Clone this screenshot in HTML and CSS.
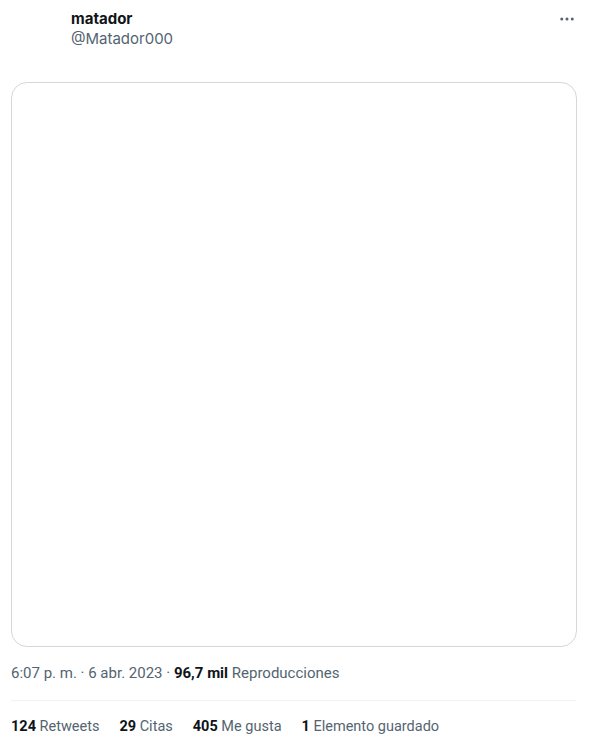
FILE: index.html
```html
<!DOCTYPE html>
<html lang="es">
  <head>
    <meta charset="UTF-8" />
    <meta name="viewport" content="width=device-width, initial-scale=1.0" />
    <title>matador - Tweet</title>
    <link rel="stylesheet" href="styles.css">
  </head>
  <body>
    <div class="tweet">
      <!-- Header -->
      <div class="tweet-header">
        <div class="author">
          <span class="author-name">matador</span>
          <span class="author-handle">@Matador000</span>
        </div>
        <button class="more-button" aria-label="Más opciones">
          <svg viewBox="0 0 24 24" width="18" height="18">
            <circle cx="5" cy="12" r="2"></circle>
            <circle cx="12" cy="12" r="2"></circle>
            <circle cx="19" cy="12" r="2"></circle>
          </svg>
        </button>
      </div>

      <!-- Media -->
      <div class="media-card"></div>

      <!-- Meta -->
      <div class="tweet-meta">
        6:07 p. m. · 6 abr. 2023 · <b>96,7 mil</b> Reproducciones
      </div>

      <!-- Stats -->
      <div class="tweet-stats">
        <span><b>124</b> Retweets</span>
        <span><b>29</b> Citas</span>
        <span><b>405</b> Me gusta</span>
        <span><b>1</b> Elemento guardado</span>
      </div>
    </div>
  </body>
</html>
```

FILE: styles.css
```css
body {
  font-family: "Roboto", "Inter", sans-serif;
  margin: 0;
  padding: 0;
  background-color: #fff;
  color: #0f1419;
}

.tweet {
  width: 593px;
  padding: 0 16px 0 11px;
  box-sizing: border-box;
}

.tweet-header {
  display: flex;
  justify-content: space-between;
  align-items: flex-start;
  padding: 9px 0 0 60px;
  height: 82px;
  box-sizing: border-box;
}

.author {
  display: flex;
  flex-direction: column;
  font-family: "Inter", sans-serif;
  font-size: 15px;
  line-height: 20px;
}

.author-name {
  font-weight: 700;
}

.author-handle {
  color: #536471;
}

.more-button {
  background: none;
  border: none;
  padding: 0;
  margin: 1px 1px 0 0;
  cursor: pointer;
  fill: #536471;
  display: flex;
}

.media-card {
  height: 565px;
  border: 1px solid #d4d8db;
  border-radius: 16px;
  box-sizing: border-box;
  margin-bottom: 16px;
}

.tweet-meta {
  font-size: 15px;
  line-height: 20px;
  color: #536471;
  padding-bottom: 17px;
  border-bottom: 1px solid #eff3f4;
  margin-right: 1px;
}

.tweet-meta b {
  color: #0f1419;
  font-weight: 700;
}

.tweet-stats {
  display: flex;
  gap: 20px;
  padding-top: 16px;
  font-size: 14.5px;
  line-height: 20px;
  color: #536471;
}

.tweet-stats b {
  color: #0f1419;
  font-weight: 700;
}
```
